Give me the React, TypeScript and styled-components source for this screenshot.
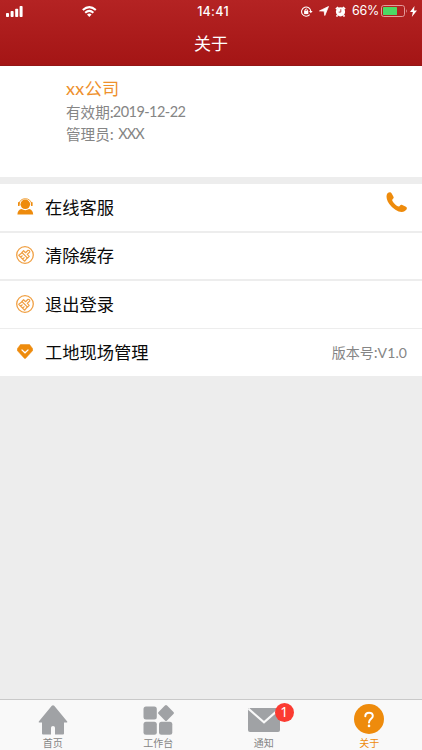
import React from 'react';
import styled, { createGlobalStyle } from 'styled-components';

const GlobalStyle = createGlobalStyle`
  * { box-sizing: border-box; }
  body { margin: 0; background: #ededed; }
  svg { display: block; flex: none; }
`;

const ORANGE = '#ee8b0c';
const GREY = '#a0a2a5';

const Screen = styled.div`
  width: 422px;
  height: 750px;
  display: flex;
  flex-direction: column;
  overflow: hidden;
  background: #ededed;
  font-family: 'Noto Sans CJK SC', sans-serif;
`;

const Header = styled.header`
  height: 66px;
  flex: none;
  color: #fff;
  background: linear-gradient(#b42323, #a41515);
  border-bottom: 1px solid #941616;
`;

const StatusBar = styled.div`
  height: 22px;
  display: grid;
  grid-template-columns: 1fr 60px 1fr;
  align-items: center;
  font: 13px/22px Inter, sans-serif;
`;

const StatusLeft = styled.div`
  display: flex;
  align-items: center;
  gap: 59px;
  padding: 0 0 1px 6px;
`;

const Clock = styled.time`
  text-align: center;
  font-weight: 500;
  font-size: 12.5px;
  letter-spacing: 0.3px;
  padding-left: 4px;
`;

const StatusRight = styled.div`
  display: flex;
  align-items: center;
  justify-content: flex-end;
  padding: 0 5px 1px 0;
`;

const StatusIcon = styled.span<{ $gap: number }>`
  margin-right: ${(p) => p.$gap}px;
`;

const Percent = styled.span`
  font-size: 12.5px;
  width: 26px;
  margin-right: 3px;
  letter-spacing: -0.3px;
  white-space: nowrap;
`;

const Title = styled.h1`
  margin: 0;
  height: 43px;
  text-align: center;
  font-size: 17px;
  line-height: 42px;
  font-weight: 400;
`;

const Profile = styled.section`
  height: 111px;
  flex: none;
  padding: 9px 0 0 66px;
  background: #fff;
  color: #858585;
  font-size: 14.6px;
  line-height: 22px;
`;

const Company = styled.h2`
  margin: 0;
  color: #ee902c;
  font-size: 17.25px;
  line-height: 26px;
  font-weight: 400;
`;

const CompanyPrefix = styled.span`
  font-family: Lato, sans-serif;
  font-size: 18px;
  letter-spacing: 0.4px;
`;

const Field = styled.div`
  display: flex;
`;

const Latin = styled.span<{ $spacing: number; $indent?: number }>`
  font-family: Lato, sans-serif;
  font-size: 14.5px;
  letter-spacing: ${(p) => p.$spacing}px;
  margin-left: ${(p) => p.$indent ?? 0}px;
`;

const Menu = styled.ul`
  list-style: none;
  margin: 7px 0 0;
  padding: 0;
`;

const Row = styled.li<{ $height: number; $line: number }>`
  height: ${(p) => p.$height}px;
  border-bottom: ${(p) => p.$line}px solid #ededed;
  background: #fff;
  display: flex;
  align-items: center;
  padding: 0 15px 2px;
`;

const IconSlot = styled.span`
  width: 20px;
  display: flex;
  justify-content: center;
`;

const Label = styled.span`
  flex: 1;
  margin-left: 10px;
  font-size: 17.25px;
  line-height: 24px;
  color: #0a0a0a;
`;

const Version = styled.span`
  color: #858585;
  font-size: 14px;
`;

const VersionNumber = styled.span`
  font-family: Lato, sans-serif;
  font-size: 14px;
  letter-spacing: 0.1px;
`;

const PhoneSlot = styled.span`
  align-self: flex-start;
  margin-top: 8px;
`;

const TabBar = styled.nav`
  height: 51px;
  flex: none;
  margin-top: auto;
  border-top: 1px solid #c9c9c9;
  background: #f9f9f9;
  display: grid;
  grid-template-columns: repeat(4, 1fr);
`;

const Tab = styled.a<{ $active?: boolean }>`
  display: flex;
  flex-direction: column;
  align-items: center;
  color: ${(p) => (p.$active ? ORANGE : '#858585')};
  font-size: 10px;
  line-height: 14px;
`;

const TabIcon = styled.span<{ $top?: number }>`
  position: relative;
  height: 36px;
  display: flex;
  align-items: flex-start;
  padding-top: ${(p) => p.$top ?? 5}px;
`;

const Badge = styled.span`
  position: absolute;
  left: 27px;
  top: 3px;
  width: 19px;
  height: 19px;
  border-radius: 50%;
  background: #fb3b31;
  color: #fff;
  font: 14px/18px 'Noto Sans', sans-serif;
  text-align: center;
`;

const Signal = () => (
  <svg width="17" height="11" viewBox="0 0 17 11" fill="#fff">
    <rect x="0" y="7" width="3" height="4" rx=".8" />
    <rect x="4.6" y="5" width="3" height="6" rx=".8" />
    <rect x="9.2" y="2.7" width="3" height="8.3" rx=".8" />
    <rect x="13.6" y="0" width="3" height="11" rx=".8" />
  </svg>
);

const Wifi = () => (
  <svg width="15" height="11" viewBox="0 0 15 11" fill="none" stroke="#fff" strokeWidth="2">
    <path d="M.8 4.1Q7.3-1.9 13.8 4.1" />
    <path d="M3.2 6.8Q7.3 3 11.4 6.8" />
    <path d="M5 8.5Q7.3 6.7 9.6 8.5L7.3 10.9Z" fill="#fff" stroke="none" />
  </svg>
);

const RotationLock = () => (
  <svg width="12" height="11" viewBox="0 0 12 11" fill="none" stroke="#fff">
    <path d="M8.7 8.6A4.6 4.6 0 1 1 9.8 5.2" strokeWidth="1.1" />
    <path d="M8 5H11.6L9.8 7.3Z" fill="#fff" stroke="none" />
    <rect x="3.1" y="4.7" width="4.2" height="3.4" fill="#fff" stroke="none" />
    <path d="M4 5V3.8Q5.2 2 6.4 3.8V5" strokeWidth=".9" />
  </svg>
);

const LocationArrow = () => (
  <svg width="10" height="10" viewBox="0 0 10 10" fill="#fff" stroke="#fff" strokeWidth=".8" strokeLinejoin="round">
    <path d="M9.5.5L5.8 9.5L5.1 5.1L.5 4.9Z" />
  </svg>
);

const Alarm = () => (
  <svg width="11" height="11" viewBox="0 0 11 11">
    <circle cx="5.5" cy="5.8" r="4.6" fill="#fff" />
    <path d="M.9 3.2L3.2 1M10.1 3.2L7.8 1M2.5 9.3L1.5 10.6M8.5 9.3L9.5 10.6" stroke="#fff" strokeWidth="1.7" />
    <path d="M5.8 3.2V6.1H3.7" fill="none" stroke="#ae2020" strokeWidth=".8" />
  </svg>
);

const Battery = () => (
  <svg width="27" height="12" viewBox="0 0 27 12">
    <rect x=".5" y=".5" width="23" height="11" rx="2.2" fill="none" stroke="#e39b9b" />
    <rect x="2" y="2" width="14" height="8" rx=".6" fill="#4cd964" />
    <path d="M25 4Q26.8 6 25 8Z" fill="#e39b9b" />
  </svg>
);

const Bolt = () => (
  <svg width="7" height="11" viewBox="0 0 7 11" fill="#fff">
    <path d="M4.5 0L0 6H2.9L1.8 11L7 4.5H4Z" />
  </svg>
);

const Agent = () => (
  <svg width="17" height="17" viewBox="0 0 17 17" fill={ORANGE}>
    <circle cx="8.3" cy="6.3" r="4.8" />
    <path d="M2 6.6C2-1.3 14.6-1.3 14.6 6.6" fill="none" stroke={ORANGE} strokeWidth=".8" />
    <rect x="1" y="4.1" width="1.6" height="4" rx=".7" />
    <rect x="14" y="4.1" width="1.6" height="4" rx=".7" />
    <path d="M.4 16.4C.6 13.1 2.1 11.7 4.5 11.1Q8.3 13.3 12.1 11.1C14.5 11.7 16 13.1 16.2 16.4Z" />
  </svg>
);

const Brush = () => (
  <svg width="18" height="18" viewBox="0 0 18 18" fill="none" stroke="#f0a044">
    <circle cx="9" cy="9" r="8.3" strokeWidth="1.3" />
    <g transform="rotate(45 9 9)" strokeWidth="1.2" strokeLinejoin="round">
      <path d="M7.8 7V3.5Q9 2.2 10.2 3.5V7H13V9.4H5V7Z" />
      <path d="M5.3 9.5L4.8 13.6H13.2L12.7 9.5M7.6 13.5V11.1M10.3 13.5V11.1" />
    </g>
  </svg>
);

const Gem = () => (
  <svg width="16" height="15" viewBox="0 0 16 14" preserveAspectRatio="none">
    <path d="M3.5.4H12.5L15.7 4.4V6.1L8.7 13.3Q8 13.9 7.3 13.3L.3 6.1V4.4Z" fill={ORANGE} stroke={ORANGE} strokeWidth=".5" strokeLinejoin="round" />
    <path d="M5 5.6L8 8.2L11 5.6" fill="none" stroke="#fff" strokeWidth="1.2" strokeLinecap="round" />
  </svg>
);

const Phone = () => (
  <svg width="21" height="21" viewBox="0 0 21 21" fill={ORANGE}>
    <path d="M1.3 1.5C3 .1 4.8-.2 5.7 1.4L7.6 5C8.1 6.1 6.4 6.8 6.1 8C6.7 10.3 10.4 14.2 12.8 14.6C14 14.4 14.3 12.5 15.7 12.8L19.5 14.6C21.8 15.8 20.9 17.6 18.9 19.1C14.3 21.7 8.4 17.8 4.8 13.7C1.6 10-.8 5.3 1.3 1.5Z" />
  </svg>
);

const Home = () => (
  <svg width="30" height="30" viewBox="0 0 30 30" fill={GREY}>
    <path d="M13.8.8Q15-.2 16.2.8L29.2 16.5Q29.5 17.5 28.6 17.5H26V28.5Q26 29.5 25 29.5H17V22.8Q17 21 15 21T13 22.8V29.5H5Q4 29.5 4 28.5V17.5H1.4Q.5 17.5.8 16.5Z" />
  </svg>
);

const Workbench = () => (
  <svg width="31" height="30" viewBox="0 0 31 30" fill={GREY}>
    <rect x=".5" y="1.5" width="13.3" height="13" rx="2.5" />
    <rect x="17" y="2" width="12" height="12" rx="1.5" transform="rotate(45 23 8)" />
    <rect x=".5" y="16.7" width="13.3" height="13" rx="2.5" />
    <rect x="16" y="16.7" width="13.3" height="13" rx="2.5" />
  </svg>
);

const Mail = () => (
  <svg width="32" height="24" viewBox="0 0 32 24">
    <rect width="32" height="24" rx="2" fill={GREY} />
    <path d="M.6.8L16 14.3L31.4.8" fill="none" stroke="#f9f9f9" strokeWidth="2.1" />
  </svg>
);

const Question = () => (
  <svg width="30" height="30" viewBox="0 0 30 30">
    <circle cx="15" cy="15" r="15" fill={ORANGE} />
    <path d="M11.3 12.2C11.3 7.4 18.8 7.6 18.8 12C18.8 14.7 15 14.8 15 18.4" fill="none" stroke="#fff" strokeWidth="2" strokeLinecap="round" />
    <circle cx="15" cy="21.9" r="1.3" fill="#fff" />
  </svg>
);

export default function App() {
  return (
    <Screen>
      <GlobalStyle />
      <Header>
        <StatusBar>
          <StatusLeft><Signal /><Wifi /></StatusLeft>
          <Clock>14:41</Clock>
          <StatusRight>
            <StatusIcon $gap={6}><RotationLock /></StatusIcon>
            <StatusIcon $gap={6}><LocationArrow /></StatusIcon>
            <StatusIcon $gap={6}><Alarm /></StatusIcon>
            <Percent>66%</Percent>
            <StatusIcon $gap={2}><Battery /></StatusIcon>
            <Bolt />
          </StatusRight>
        </StatusBar>
        <Title>关于</Title>
      </Header>
      <Profile>
        <Company><CompanyPrefix>xx</CompanyPrefix>公司</Company>
        <Field>有效期:<Latin $spacing={-0.55} $indent={-1}>2019-12-22</Latin></Field>
        <Field>管理员:<Latin $spacing={-0.9} $indent={4.5}>XXX</Latin></Field>
      </Profile>
      <Menu>
        <Row $height={49} $line={2}>
          <IconSlot><Agent /></IconSlot><Label>在线客服</Label>
          <PhoneSlot><Phone /></PhoneSlot>
        </Row>
        <Row $height={48} $line={2}>
          <IconSlot><Brush /></IconSlot><Label>清除缓存</Label>
        </Row>
        <Row $height={48} $line={1}>
          <IconSlot><Brush /></IconSlot><Label>退出登录</Label>
        </Row>
        <Row $height={47} $line={0}>
          <IconSlot><Gem /></IconSlot><Label>工地现场管理</Label>
          <Version>版本号:<VersionNumber>V1.0</VersionNumber></Version>
        </Row>
      </Menu>
      <TabBar>
        <Tab><TabIcon><Home /></TabIcon>首页</Tab>
        <Tab><TabIcon><Workbench /></TabIcon>工作台</Tab>
        <Tab><TabIcon $top={8}><Mail /><Badge>1</Badge></TabIcon>通知</Tab>
        <Tab $active><TabIcon $top={4}><Question /></TabIcon>关于</Tab>
      </TabBar>
    </Screen>
  );
}
